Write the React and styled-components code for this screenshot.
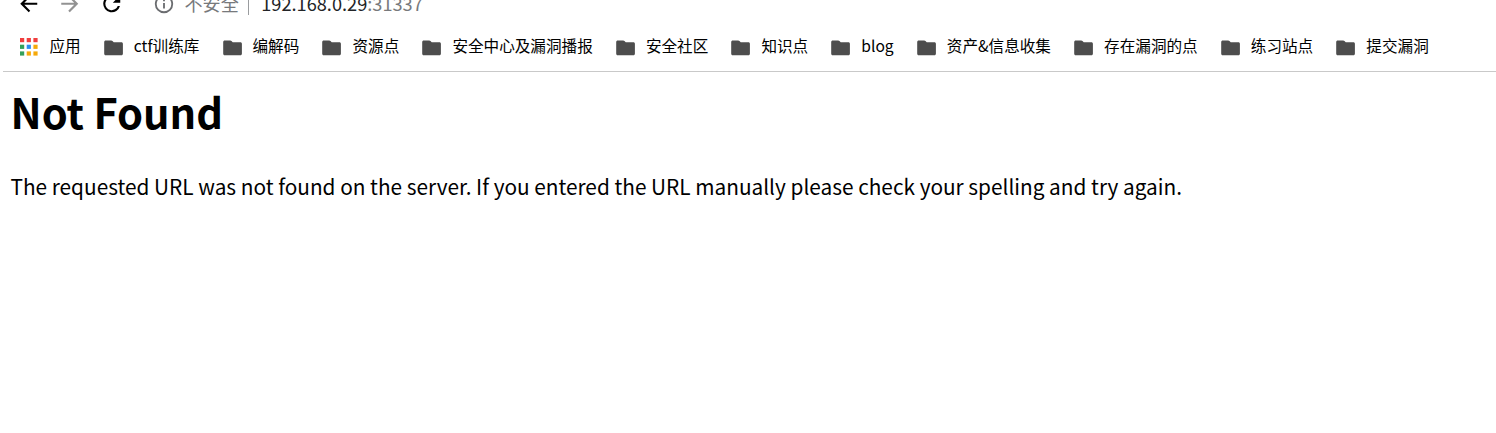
import React from 'react';
import styled, { createGlobalStyle } from 'styled-components';

const GlobalStyle = createGlobalStyle`
  html, body { margin: 0; background: #fff; overflow: hidden; }
  body { font-family: "Noto Sans CJK SC", "Noto Sans", sans-serif; color: #000; }
`;

const Browser = styled.div`
  height: 433px;
  overflow: hidden;
`;

const Toolbar = styled.nav`
  display: flex;
  align-items: center;
  height: 36px;
  margin-top: -14px;
  padding-left: 15.5px;
`;

const NavIcon = styled.svg`
  flex: none;
  width: 25.5px;
  height: 25.5px;
  margin-right: 16.2px;
  fill: ${(p) => p.$color};
`;

const InfoIcon = styled.svg`
  flex: none;
  width: 22px;
  height: 22px;
  margin-left: 12px;
  fill: #6b6d70;
`;

const Security = styled.span`
  margin-left: 9.9px;
  font-size: 18.1px;
  line-height: 34px;
  padding-bottom: 2px;
  color: #77797c;
`;

const Divider = styled.span`
  width: 1px;
  height: 22px;
  margin: 0 12.5px 0 9px;
  background: #9a9c9f;
`;

const Address = styled.span`
  font-size: 18.2px;
  line-height: 34px;
  padding-bottom: 2px;
  color: #222427;
`;

const Port = styled.span`
  color: #77797c;
`;

const Bookmarks = styled.div`
  display: flex;
  align-items: center;
  gap: 23.15px;
  height: 49px;
  margin-left: 3px;
  padding-left: 17px;
  border-bottom: 1px solid #c9c9c9;
`;

const Bookmark = styled.div`
  display: flex;
  align-items: center;
  gap: ${(p) => p.$gap || 11}px;
  white-space: nowrap;
`;

const Label = styled.span`
  padding-bottom: 3px;
  font-size: 15.6px;
  line-height: 24px;
`;

const AppsIcon = styled.svg`
  width: 18px;
  height: 18px;
`;

const FolderIcon = styled.svg`
  width: 19px;
  height: 16px;
  margin-top: 2px;
  fill: #4d4d4d;
`;

const Page = styled.main`
  padding: 9px 8px 0 10.5px;
`;

const Title = styled.h1`
  margin: 0;
  font-size: 41.6px;
  line-height: 60px;
  font-weight: 700;
`;

const Message = styled.p`
  margin: 29px 0 0;
  font-size: 20.8px;
  line-height: 32px;
  white-space: nowrap;
`;

const dots = ['#f03e3e', '#f03e3e', '#f03e3e', '#34a05a', '#2d8cf0', '#f5a90a', '#34a05a', '#f5a90a', '#f5a90a'];

const folders = [
  'ctf训练库', '编解码', '资源点', '安全中心及漏洞播报', '安全社区', '知识点',
  'blog', '资产&信息收集', '存在漏洞的点', '练习站点', '提交漏洞',
];

export default function App() {
  return (
    <Browser>
      <GlobalStyle />
      <Toolbar>
        <NavIcon $color="#000" viewBox="0 0 24 24">
          <path d="M20 11H7.83l5.59-5.59L12 4l-8 8 8 8 1.41-1.41L7.83 13H20v-2z" />
        </NavIcon>
        <NavIcon $color="#929292" viewBox="0 0 24 24">
          <path d="M12 4l-1.41 1.41L16.17 11H4v2h12.17l-5.58 5.59L12 20l8-8z" />
        </NavIcon>
        <NavIcon $color="#000" viewBox="0 0 24 24">
          <path d="M17.65 6.35A7.96 7.96 0 0 0 12 4a8 8 0 1 0 7.73 10h-2.08A6 6 0 1 1 12 6c1.66 0 3.14.69 4.22 1.78L13 11h7V4l-2.35 2.35z" />
        </NavIcon>
        <InfoIcon viewBox="0 0 24 24">
          <path d="M11 7h2v2h-2zm0 4h2v6h-2zm1-9a10 10 0 1 0 0 20 10 10 0 0 0 0-20zm0 18a8 8 0 1 1 0-16 8 8 0 0 1 0 16z" />
        </InfoIcon>
        <Security>不安全</Security>
        <Divider />
        <Address>192.168.0.29<Port>:31337</Port></Address>
      </Toolbar>
      <Bookmarks>
        <Bookmark $gap={11.5}>
          <AppsIcon viewBox="0 0 18 18">
            {dots.map((color, i) => (
              <rect key={i} x={(i % 3) * 6.7} y={Math.floor(i / 3) * 6.7} width="4.2" height="4.2" fill={color} />
            ))}
          </AppsIcon>
          <Label>应用</Label>
        </Bookmark>
        {folders.map((name) => (
          <Bookmark key={name}>
            <FolderIcon viewBox="0 0 19 16">
              <path d="M1.8.5h5.4c.6 0 1 .2 1.3.6L9.7 2.3h7.7c.9 0 1.5.6 1.5 1.5v9.9c0 .9-.6 1.5-1.5 1.5H1.7c-.9 0-1.5-.6-1.5-1.5V2C.2 1.1.8.5 1.8.5z" />
            </FolderIcon>
            <Label>{name}</Label>
          </Bookmark>
        ))}
      </Bookmarks>
      <Page>
        <Title>Not Found</Title>
        <Message>
          The requested URL was not found on the server. If you entered the URL manually please check your spelling and try again.
        </Message>
      </Page>
    </Browser>
  );
}
